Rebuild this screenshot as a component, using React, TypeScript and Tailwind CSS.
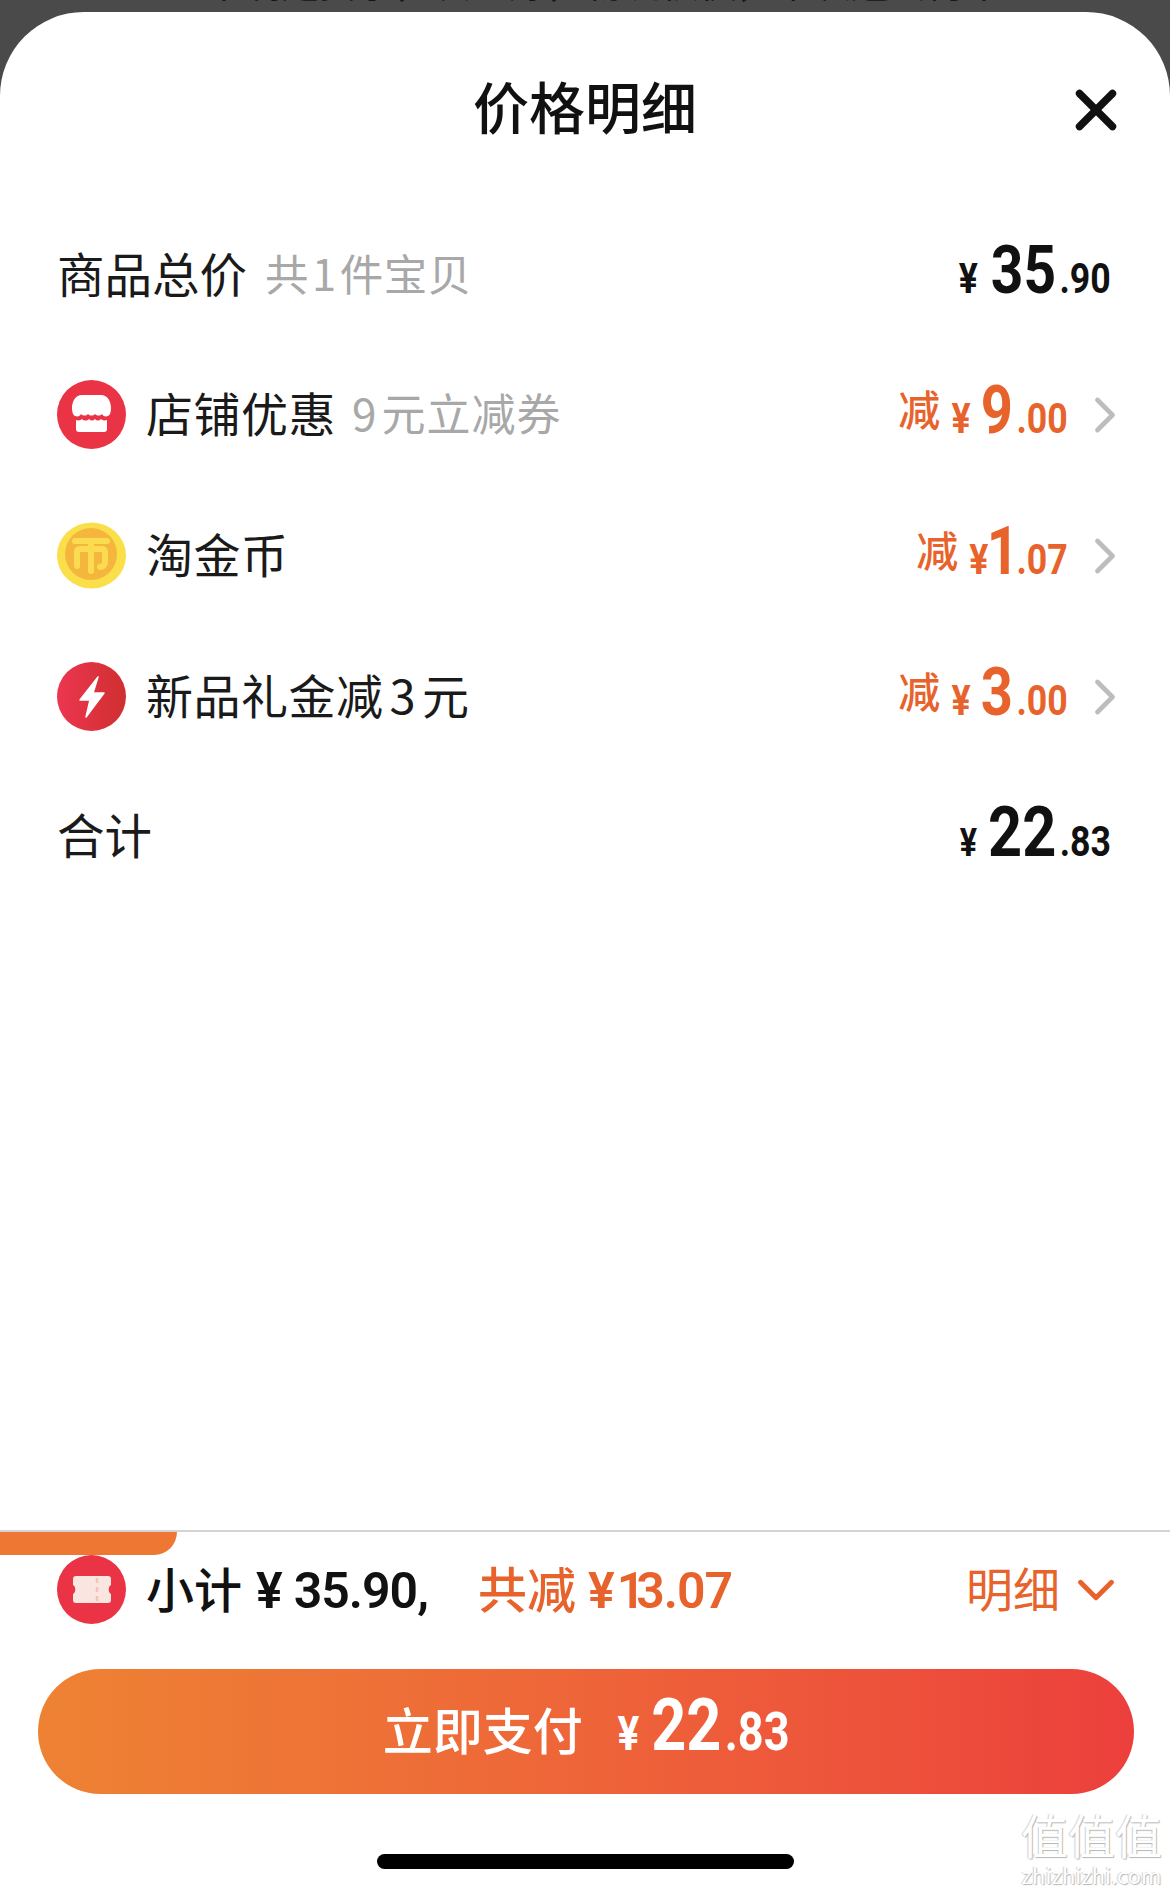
import type { ReactNode } from "react";
import { ChevronRight, ChevronDown, X } from "lucide-react";

const CJK = "font-['Noto_Sans_CJK_SC','Noto_Sans',sans-serif]";
const NUM = "font-['Roboto','Noto_Sans',sans-serif]";
const RED = "text-[#e8622c]";

const StoreIcon = () => (
  <svg className="w-[69px] h-[69px] shrink-0" viewBox="0 0 69 69">
    <circle cx="34.5" cy="34.5" r="34.5" fill="#ea3344" />
    <path d="M25 15h19c7 0 10 7 10 13 0 4-1 7-3 8-3 1-5 0-6-2-2 2-5 2-7 0-2 2-5 2-7 0-2 2-5 2-7 0-1 2-3 3-6 2-2-1-3-4-3-8 0-6 3-13 10-13z" fill="#fff" />
    <path d="M19 40c3 1 5 0 6-1 2 2 5 2 7 0 2 2 4 2 6 0 2 2 4 2 6 0 1 1 3 2 6 1v9c0 2-1 3-3 3H22c-2 0-3-1-3-3z" fill="#fff" />
  </svg>
);

const CoinIcon = () => (
  <svg className="w-[69px] h-[69px] shrink-0" viewBox="0 0 69 69">
    <ellipse cx="34.5" cy="34.5" rx="34.5" ry="33" fill="#fadf4a" />
    <circle cx="34" cy="33" r="26" fill="#f4b63d" />
    <g fill="none" stroke="#fbdc50" strokeWidth="6" strokeLinecap="round">
      <path d="M18 20h32" />
      <path d="M20 45V31c0-2 1-3 3-3h22c2 0 3 1 3 3v10c0 3-2 5-5 5" />
      <path d="M34 20v30" />
    </g>
  </svg>
);

const BoltIcon = () => (
  <svg className="w-[69px] h-[69px] shrink-0" viewBox="0 0 69 69">
    <defs>
      <linearGradient id="bolt" x1="0" x2="1" y1="0" y2="0">
        <stop offset="0" stopColor="#ec3650" />
        <stop offset="1" stopColor="#cf2f30" />
      </linearGradient>
    </defs>
    <circle cx="34.5" cy="34.5" r="34.5" fill="url(#bolt)" />
    <path d="M41 15 23 38h10l-4 17 18-24H36z" fill="#fff" strokeLinejoin="round" stroke="#fff" strokeWidth="1.5" />
  </svg>
);

const TicketIcon = () => (
  <svg className="w-[69px] h-[69px] shrink-0" viewBox="0 0 69 69">
    <circle cx="34.5" cy="34.5" r="34.5" fill="#ea3344" />
    <path d="M19 21h32c2 0 3 1 3 3v6c-3 1-3 8 0 9v6c0 2-1 3-3 3H19c-2 0-3-1-3-3v-6c3-1 3-8 0-9v-6c0-2 1-3 3-3z" fill="#f9e6e0" />
    <path d="M40 23v24" stroke="#f3c3b8" strokeWidth="2.5" strokeDasharray="5 4" />
  </svg>
);

// digits in the shot are a narrow DIN style face, Roboto squeezed gets close
function Price({ big, cents, color, className = "", yuanSize = "text-[42px]", yuanGap = "mr-[12px]", bigSize = "text-[70px]", centsSize = "text-[42px]", bigClass = "" }: { big: string; cents: string; color: string; className?: string; yuanSize?: string; yuanGap?: string; bigSize?: string; centsSize?: string; bigClass?: string }) {
  return (
    <span className={`flex items-baseline font-bold origin-right scale-x-[0.85] ${NUM} ${color} ${className}`}>
      <span className={`${yuanSize} ${yuanGap}`}>¥</span>
      <span className={`${bigSize} leading-none ${bigClass}`}>{big}</span>
      <span className={`${centsSize} ml-[4px]`}>.{cents}</span>
    </span>
  );
}

function DiscountRow({ icon, label, note, big, cents, pull, bigClass }: { icon: ReactNode; label: ReactNode; note?: ReactNode; big: string; cents: string; pull: string; bigClass?: string }) {
  return (
    <div className="h-[141px] flex items-center pl-[57px] pr-[35px]">
      {icon}
      <span className="ml-[20px] -mt-[5px] text-[47px] text-[#1a1a1a] tracking-[0.5px]">{label}</span>
      {note && <span className="ml-[16px] -mt-[5px] text-[44px] text-[#a8a8a8] tracking-[1px]">{note}</span>}
      <div className="ml-auto flex items-center">
        <span className={`flex items-baseline -mt-[2px] ${RED}`}>
          <span className="text-[42px] font-medium mr-[11px] -translate-y-[7px]">减</span>
          <Price big={big} cents={cents} color={RED} className={pull} bigSize="text-[66px]" bigClass={bigClass} />
        </span>
        <ChevronRight className="ml-[7px] w-[60px] h-[60px] text-[#bdbdbd]" strokeWidth={1.9} />
      </div>
    </div>
  );
}

export default function App() {
  return (
    <div className={`w-[1170px] h-[1893px] bg-[#4a4a4a] flex flex-col overflow-hidden ${CJK}`}>
      <div className="h-[12px] overflow-hidden text-center text-[38px] leading-[50px] text-[#151515]">
        <div className="-mt-[44px]">基本满足要求，质量好，物流很快，下次还会再来</div>
      </div>
      <div className="flex-1 bg-white rounded-t-[84px] flex flex-col">
        <div className="h-[192px] relative flex items-center justify-center">
          <h1 className="-mt-[6px] text-[56px] font-medium text-[#111]">价格明细</h1>
          <X className="absolute right-[41px] top-[65px] w-[66px] h-[66px] text-[#111]" strokeWidth={2.7} />
        </div>

        <div className="h-[140px] flex items-center pl-[57px] pr-[59px]">
          <span className="-mt-[3px] text-[47.5px] text-[#1a1a1a]">商品总价</span>
          <span className="ml-[18px] -mt-[3px] text-[43.5px] text-[#a8a8a8] tracking-[0.5px]">共<span className="mx-[3px]">1</span>件宝贝</span>
          <div className="ml-auto -mt-[2px]">
            <Price big="35" cents="90" color="text-[#111]" bigSize="text-[67px]" yuanGap="mr-[15px]" />
          </div>
        </div>
        <DiscountRow icon={<StoreIcon />} label="店铺优惠" note={<><span className="mr-[4px]">9</span>元立减券</>} big="9" cents="00" pull="-ml-[20px]" />
        <DiscountRow icon={<CoinIcon />} label="淘金币" big="1" cents="07" pull="-ml-[17px]" bigClass="-ml-[14px] -mr-[7px]" />
        <DiscountRow icon={<BoltIcon />} label={<>新品礼金减<span className="mx-[6px]">3</span>元</>} big="3" cents="00" pull="-ml-[20px]" />
        <div className="h-[140px] flex items-center pl-[57px] pr-[59px]">
          <span className="-mt-[6px] text-[47.5px] text-[#1a1a1a]">合计</span>
          <div className="ml-auto -mt-[4px]">
            <Price big="22" cents="83" color="text-[#111]" yuanSize="text-[38px]" yuanGap="mr-[13px]" />
          </div>
        </div>

        <div className="flex-1" />

        <div className="border-t-[2px] border-[#d4d4d4] relative">
          <div className="absolute left-0 top-0 w-[177px] h-[23px] bg-[#ee7733] rounded-br-[28px]" />
          <div className="h-[137px] flex items-center pl-[57px] pr-[43px] pb-[22px]">
            <TicketIcon />
            <span className="ml-[20px] -mt-[6px] text-[48px] font-medium text-[#111]">小计</span>
            <span className={`ml-[14px] mt-[3px] text-[50px] font-semibold text-[#111] tracking-[-1px] ${NUM}`}>¥</span>
            <span className={`ml-[12px] mt-[3px] text-[50px] font-semibold text-[#111] tracking-[-1px] ${NUM}`}>35.90,</span>
            <span className={`ml-[50px] -mt-[6px] text-[49px] font-medium ${RED}`}>共减</span>
            <span className={`ml-[12px] mt-[3px] text-[50px] font-semibold tracking-[-1px] ${RED} ${NUM}`}>¥</span>
            <span className={`ml-[8px] mt-[3px] text-[50px] font-semibold tracking-[-1px] ${RED} ${NUM}`}><span className="-ml-[5px] -mr-[8px] inline-block">1</span>3.07</span>
            <span className={`ml-auto -mt-[4px] text-[47px] ${RED}`}>明细</span>
            <ChevronDown className={`ml-[5px] w-[62px] h-[62px] ${RED}`} strokeWidth={1.9} />
          </div>
        </div>

        <div className="ml-[38px] mr-[36px] h-[125px] rounded-full bg-linear-to-r from-[#ee8233] to-[#ec3f3c] flex items-center justify-center text-white">
          <span className="-mt-[6px] text-[50px] font-medium mr-[26px]">立即支付</span>
          <Price big="22" cents="83" color="text-white" className="-ml-[22px]" yuanSize="text-[48px]" yuanGap="mr-[14px]" bigSize="text-[72px]" centsSize="text-[53px]" />
        </div>

        <div className="h-[99px] relative flex justify-center">
          <div className="mt-[60px] w-[417px] h-[15px] rounded-full bg-black" />
          <div className="absolute right-[8px] top-[16px] flex flex-col items-center text-white leading-none [text-shadow:1px_1px_1px_#b5b5b5,-1px_0_1px_#cfcfcf]">
            <span className="text-[47px]">值值值</span>
            <span className="text-[22px] mt-[6px]">zhizhizhi.com</span>
          </div>
        </div>
      </div>
    </div>
  );
}
